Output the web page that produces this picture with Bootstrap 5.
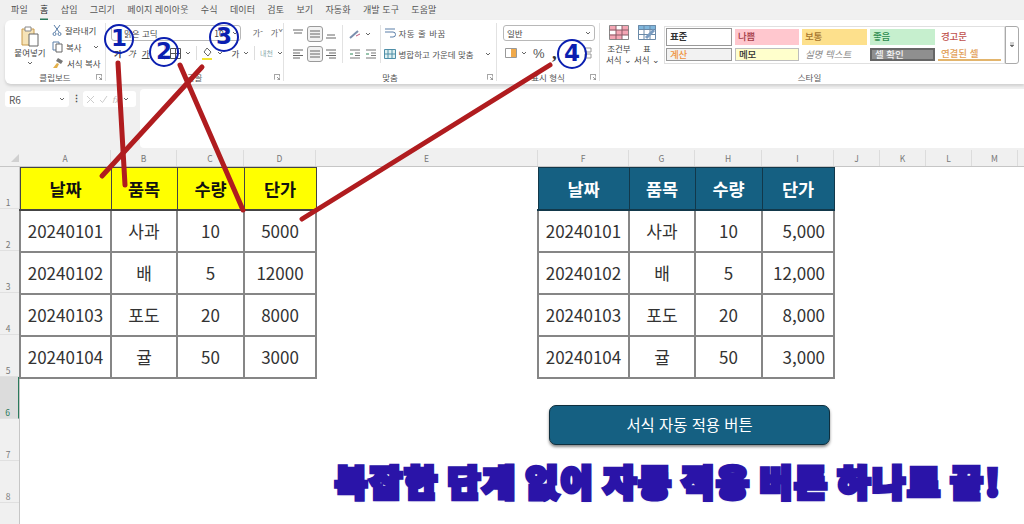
<!DOCTYPE html>
<html lang="ko">

<head>
    <meta charset="UTF-8">
    <title>서식 자동 적용</title>
    <link href="https://cdn.jsdelivr.net/npm/bootstrap@5.3.3/dist/css/bootstrap.min.css" rel="stylesheet">
    <style>
        html, body { width: 1024px; height: 524px; overflow: hidden; }
        body { background: #f0f0f0; color: #444; font-family: "Noto Sans CJK KR", sans-serif; font-size: 8.5px; line-height: 1; position: relative; }
        svg { display: block; flex: none; }

        /* title tabs */
        .xl-tabs { height: 20px; padding-left: 11px; gap: 12.3px; font-size: 9px; }
        .xl-tab { height: 20px; line-height: 19px; color: #555; letter-spacing: .1px; white-space: nowrap; }
        .xl-tab-on { color: #222; box-shadow: inset 0 -2px 0 -0.5px #2b7a5c; }

        /* ribbon */
        .xl-ribbon { margin-left: 5px; height: 64px; background: #fff; border-radius: 6px 0 0 6px; box-shadow: 0 2px 3px #d0d0d0; }
        .xl-grp { position: relative; border-right: 1px solid #e2e2e2; height: 58px; margin-top: 3px; padding-top: 2px; flex: none; }
        .xl-grp-label { position: absolute; left: 0; right: 0; top: 50px; text-align: center; color: #555; }
        .xl-more { position: absolute; right: 3px; top: 51px; }
        .g-clip { width: 101px; }
        .g-font { width: 178px; }
        .g-align { width: 213px; }
        .g-num { width: 103px; }
        .g-style { width: 419px; border-right: 0; }
        .xl-chev { margin-left: 4px; }

        .clip-paste { width: 38px; margin-left: 6px; text-align: center; }
        .clip-paste div { margin-top: 1px; white-space: nowrap; }
        .clip-list { margin: -1px 0 0 3px; gap: 4.5px; }
        .clip-item { gap: 3px; height: 12px; line-height: 12px; white-space: nowrap; }

        .font-box { margin: 0 0 0 5px; width: 134px; height: 16px; border: 1px solid #b8b8b8; border-radius: 3px; padding: 0 2px 0 12px; line-height: 14px; }
        .font-top { gap: 8px; }
        .font-row { margin: 6px 0 0 8px; height: 12px; line-height: 12px; }
        .font-sz { color: #666; font-size: 8px; white-space: nowrap; }
        .font-ruby { color: #8aa; font-size: 7px; white-space: nowrap; }
        .font-sep { width: 1px; height: 14px; background: #ddd; margin: 0 5px; }
        .font-b { width: 17px; font-weight: 700; }
        .font-i { width: 17px; font-style: italic; }
        .font-u { width: 21px; text-decoration: underline; }

        .align-cell { width: 16.5px; height: 16px; display: flex; align-items: center; justify-content: center; }
        .align-on { border: 1px solid #9a9a9a; border-radius: 3px; background: #f2f2f2; }
        .align-col { padding: 0 0 0 6px; gap: 3px; }
        .align-row { height: 17px; align-items: center; }
        .align-sep { width: 1px; height: 38px; background: #e2e2e2; }
        .align-sep-a { margin-left: 2px; }
        .align-sep-b { margin-left: 3px; }
        .align-wrap { padding: 0 0 0 3px; gap: 5px; }
        .wrap-item { gap: 3px; height: 16px; align-items: center; white-space: nowrap; color: #555; }
        .wrap-text { letter-spacing: .5px; }

        .num-box { margin: 0 0 0 6px; width: 92px; height: 16px; border: 1px solid #b8b8b8; border-radius: 3px; padding: 0 3px; line-height: 14px; }
        .num-row { margin: 5px 0 0 8px; height: 14px; }
        .num-pct { font-size: 13px; margin-left: 6px; width: 16px; color: #555; font-family: "Liberation Sans", sans-serif; }
        .num-comma { font-size: 19px; font-weight: 700; width: 32px; margin-left: 3px; line-height: 10px; color: #333; font-family: "Liberation Serif", serif; }

        .cond-item { width: 30px; text-align: center; line-height: 11px; white-space: nowrap; }
        .cond-first { margin-left: 5px; }
        .cond-item svg { margin: 0 auto 3px; }
        .gallery { margin: 1px 0 0 3px; width: 341px; height: 38px; border: 1px solid #e0e0e0; display: grid; grid-template-columns: 69px 67px 68px 68px 66px; grid-template-rows: 18px 15px; row-gap: 1px; padding: 1px 0 0 1px; }
        .gal-scroll { margin: 1px 0 0 0; width: 15px; height: 38px; border: 1px solid #aaa; border-radius: 0 3px 3px 0; }
        .sty { display: flex; align-items: center; font-size: 9.5px; padding-left: 3px; margin: 1px 3px 1px 0; font-weight: 500; }
        .sty-norm { border: 1px solid #999; color: #333; margin: 0 3px 0 0; font-weight: 700; }
        .sty-bad { background: #ffc7ce; color: #a33a45; }
        .sty-mid { background: #fde08c; color: #a5742d; }
        .sty-good { background: #c6efce; color: #2c8a4d; }
        .sty-warn { color: #c0504d; }
        .sty-calc { background: #f2f2f2; border: 1px solid #999; color: #ef9440; }
        .sty-memo { background: #ffffcc; border: 1px solid #bdbdbd; color: #333; }
        .sty-note { color: #8a8a8a; font-style: italic; font-weight: 400; }
        .sty-check { background: #8f8f8f; border: 2px solid #666; color: #f2f2f2; }
        .sty-link { color: #e2a05a; border-bottom: 2px solid #e3b56d; }

        /* formula bar */
        .xl-fbar { height: 66px; padding: 7px 0 2px 5px; }
        .fbar-name { width: 64px; height: 16px; background: #fff; border-radius: 3px; padding: 0 4px; font-size: 10px; color: #555; line-height: 15px; }
        .fbar-dots { width: 14px; text-align: center; line-height: 14px; font-weight: 700; }
        .fbar-fn { width: 53px; height: 16px; background: #fff; border-radius: 3px; padding: 0 3px; gap: 4px; color: #bbb; }
        .fbar-input { margin: -2px 0 0 4px; flex: 1; height: 59px; background: #fff; border-radius: 4px 0 0 4px; }

        /* sheet */
        .xl-cols { height: 17px; border-bottom: 1px solid #c6c6c6; }
        .col-corner { width: 20px; position: relative; }
        .col-corner svg { position: absolute; left: 11px; top: 4px; }
        .col-h { text-align: center; line-height: 16px; color: #777; font-size: 8.5px; border-right: 1px solid #dcdcdc; }
        .cw-a { width: 91px; }
        .cw-b { width: 66px; }
        .cw-c { width: 67px; }
        .cw-d { width: 72px; }
        .cw-e { width: 222px; }
        .cw-j { width: 46px; }
        .xl-body { height: 357px; }
        .row-heads { width: 20px; border-right: 1px solid #c6c6c6; flex: none; }
        .row-h { height: 42px; text-align: center; color: #777; padding: 31px 3px 0 0; font-size: 8.5px; border-bottom: 1px solid #e0e0e0; }
        .row-on { background: #dcdcdc; border-right: 1px solid #2b7a5c; color: #2b7a5c; }
        .xl-cells { background: #fff; flex: 1; }

        .xl-table { table-layout: fixed; width: 297px; margin: 0 0 0 -1px; border-color: #868686; flex: none; }
        .xl-table > :not(caption) > * > * { padding: 0; height: 42px; text-align: center; vertical-align: middle; font-size: 17px; line-height: 1; color: #333; border-width: 2px; box-shadow: none; background: transparent; }
        .xl-table .money { text-align: right; padding-right: 8px; }
        .xl-table thead th { font-size: 17.5px; font-weight: 700; color: #111; border-width: 1px 1px 2px; border-color: #444; }
        .tbl-plain thead th { background: #ffff00; }
        .tbl-done { margin-left: 220px; }
        .tbl-done thead th { background: #156082; color: #fff; border-color: #12384a; }

        .auto-btn { position: absolute; left: 549px; top: 405px; width: 281px; height: 40px; background: #156082; border: 1px solid #0f2f3e; border-radius: 7px; color: #fff; font-size: 15.4px; line-height: 1; box-shadow: 0 2px 3px #8a8a8a; padding: 0; }
        .headline { position: absolute; left: 335px; top: 459px; white-space: nowrap; font-size: 35px; line-height: 44px; font-weight: 900; color: #2a14a8; -webkit-text-stroke: 4.5px #2a14a8; letter-spacing: 2.6px; word-spacing: -4px; text-shadow: 0 1px 3px #8d83c8; }

        .mark-line { position: absolute; left: 0; top: 0; pointer-events: none; }
        .step { position: absolute; width: 30px; height: 30px; border: 2.5px solid #0b1fb0; color: #0b1fb0; font-size: 23px; font-weight: 700; line-height: 24px; text-align: center; font-family: "DejaVu Sans", sans-serif; }
        .step-1 { left: 104px; top: 24px; }
        .step-2 { left: 149px; top: 37px; }
        .step-3 { left: 209px; top: 22px; }
        .step-4 { left: 557px; top: 39px; }
    </style>
</head>

<body>
    <svg width="0" height="0" class="position-absolute">
        <symbol id="chev" viewBox="0 0 6 4"><path d="M1 1l2 2 2-2" fill="none" stroke="#666" stroke-width="1"/></symbol>
        <symbol id="more" viewBox="0 0 8 8"><path d="M.5 7.500v-7h7v3M4 4l3.500 3.500M4.500 7.500h3v-3" fill="none" stroke="#777" stroke-width="1"/></symbol>
        <symbol id="al-top" viewBox="0 0 12 10"><path d="M1 1h10M2 4h8" stroke="#666" fill="none"/></symbol>
        <symbol id="al-mid" viewBox="0 0 12 10"><path d="M1 2h10M1 5h10M1 8h10" stroke="#666" fill="none"/></symbol>
        <symbol id="al-bot" viewBox="0 0 12 10"><path d="M2 6h8M1 9h10" stroke="#666" fill="none"/></symbol>
        <symbol id="al-left" viewBox="0 0 12 10"><path d="M1 1h10M1 4h7M1 6.500h10M1 9h7" stroke="#666" fill="none"/></symbol>
        <symbol id="al-right" viewBox="0 0 12 10"><path d="M1 1h10M4 4h7M1 6.500h10M4 9h7" stroke="#666" fill="none"/></symbol>
        <symbol id="indent" viewBox="0 0 12 10"><path d="M1 1h10M6 4h5M6 6.500h5M1 9h10" stroke="#777" fill="none"/><path d="M1 5h3" stroke="#2e8a5a" fill="none"/></symbol>
    </svg>

    <div class="xl-tabs d-flex">
        <span class="xl-tab">파일</span>
        <span class="xl-tab xl-tab-on">홈</span>
        <span class="xl-tab">삽입</span>
        <span class="xl-tab">그리기</span>
        <span class="xl-tab">페이지 레이아웃</span>
        <span class="xl-tab">수식</span>
        <span class="xl-tab">데이터</span>
        <span class="xl-tab">검토</span>
        <span class="xl-tab">보기</span>
        <span class="xl-tab">자동화</span>
        <span class="xl-tab">개발 도구</span>
        <span class="xl-tab">도움말</span>
    </div>

    <div class="xl-ribbon d-flex">
        <div class="xl-grp g-clip d-flex">
            <div class="clip-paste">
                <svg width="20" height="22" viewBox="0 0 20 22" class="mx-auto"><path d="M2 4h12v16H2z" fill="#f6e3b8" stroke="#c99a4b"/><path d="M5 2h6v4H5z" fill="#fff" stroke="#888"/><path d="M9 9h9v12H9z" fill="#fff" stroke="#666"/></svg>
                <div>붙여넣기</div>
                <svg width="6" height="4" class="mx-auto mt-1"><use href="#chev"/></svg>
            </div>
            <div class="clip-list d-flex flex-column">
                <div class="clip-item d-flex">
                    <svg width="10" height="12" viewBox="0 0 10 12"><path d="M2 1l5 7M8 1L3 8" stroke="#5a7ea8" fill="none"/><circle cx="2.500" cy="10" r="1.500" fill="none" stroke="#5a7ea8"/><circle cx="7.500" cy="10" r="1.500" fill="none" stroke="#5a7ea8"/></svg>
                    <span>잘라내기</span>
                </div>
                <div class="clip-item d-flex align-items-center">
                    <svg width="11" height="12" viewBox="0 0 11 12"><path d="M1 1h6v8H1z" fill="#fff" stroke="#5a7ea8"/><path d="M4 3h6v8H4z" fill="#fff" stroke="#666"/></svg>
                    <span>복사</span>
                    <svg width="6" height="4" class="ms-2"><use href="#chev"/></svg>
                </div>
                <div class="clip-item d-flex">
                    <svg width="12" height="12" viewBox="0 0 12 12"><path d="M6 1l5 3-2 3-5-3z" fill="#777"/><path d="M5 6L1 11h4l2-4z" fill="#e3b04b"/></svg>
                    <span>서식 복사</span>
                </div>
            </div>
            <div class="xl-grp-label">클립보드</div>
            <svg class="xl-more" width="6" height="6"><use href="#more"/></svg>
        </div>

        <div class="xl-grp g-font">
            <div class="d-flex align-items-center font-top">
                <div class="font-box d-flex align-items-center justify-content-between">
                    <span>맑은 고딕</span><span class="ms-auto me-2">10</span>
                    <svg width="6" height="4"><use href="#chev"/></svg>
                </div>
                <span class="font-sz ms-1">가ˆ</span>
                <span class="font-sz">가ˇ</span>
            </div>
            <div class="font-row d-flex align-items-center">
                <span class="font-b">가</span>
                <span class="font-i">가</span>
                <span class="font-u">가</span>
                <span class="font-sep"></span>
                <svg width="11" height="11" viewBox="0 0 11 11"><path d="M.5.500h10v10H.500zM5.500.500v10M.500 5.500h10" fill="none" stroke="#555"/></svg>
                <svg class="xl-chev" width="6" height="4"><use href="#chev"/></svg>
                <span class="font-sep"></span>
                <svg width="12" height="13" viewBox="0 0 12 13"><path d="M6 1l4 4-3 4-4-4z" fill="#fff" stroke="#666"/><path d="M1 11h10v2H1z" fill="#f2e533"/></svg>
                <svg class="xl-chev" width="6" height="4"><use href="#chev"/></svg>
                <span class="ms-2">가</span>
                <svg class="xl-chev" width="6" height="4"><use href="#chev"/></svg>
                <span class="font-sep"></span>
                <span class="font-ruby">내천</span>
                <svg class="xl-chev" width="6" height="4"><use href="#chev"/></svg>
            </div>
            <div class="xl-grp-label">글꼴</div>
            <svg class="xl-more" width="6" height="6"><use href="#more"/></svg>
        </div>

        <div class="xl-grp g-align d-flex">
            <div class="align-col d-flex flex-column">
                <div class="d-flex align-row">
                    <span class="align-cell"><svg width="12" height="10"><use href="#al-top"/></svg></span>
                    <span class="align-cell align-on"><svg width="12" height="10"><use href="#al-mid"/></svg></span>
                    <span class="align-cell"><svg width="12" height="10"><use href="#al-bot"/></svg></span>
                </div>
                <div class="d-flex align-row">
                    <span class="align-cell"><svg width="12" height="10"><use href="#al-left"/></svg></span>
                    <span class="align-cell align-on"><svg width="12" height="10"><use href="#al-mid"/></svg></span>
                    <span class="align-cell"><svg width="12" height="10"><use href="#al-right"/></svg></span>
                </div>
            </div>
            <span class="align-sep align-sep-a"></span>
            <div class="align-col d-flex flex-column">
                <div class="d-flex align-row">
                    <svg width="12" height="10" viewBox="0 0 12 10"><path d="M1 9l8-7" stroke="#7a8fae" stroke-width="2" fill="none"/><path d="M7 7l4-2" stroke="#c05a7c" fill="none"/></svg>
                    <svg class="xl-chev" width="6" height="4"><use href="#chev"/></svg>
                </div>
                <div class="d-flex align-row gap-1">
                    <svg width="12" height="10"><use href="#indent"/></svg>
                    <svg width="12" height="10"><use href="#indent"/></svg>
                </div>
            </div>
            <span class="align-sep align-sep-b"></span>
            <div class="align-wrap d-flex flex-column">
                <div class="wrap-item d-flex">
                    <svg width="12" height="12" viewBox="0 0 12 12"><path d="M1 2h10M1 5h8a2 2 0 0 1 0 5H6" fill="none" stroke="#5a7ea8"/></svg>
                    <span class="wrap-text">자동 줄 바꿈</span>
                </div>
                <div class="wrap-item d-flex">
                    <svg width="12" height="12" viewBox="0 0 12 12"><path d="M.5 1.500h11v9H.500zM.500 6h11M4 1.500v9M8 1.500v9" fill="#dff0f0" stroke="#4f8fa8"/></svg>
                    <span>병합하고 가운데 맞춤</span>
                    <svg class="ms-2" width="6" height="4"><use href="#chev"/></svg>
                </div>
            </div>
            <div class="xl-grp-label">맞춤</div>
            <svg class="xl-more" width="6" height="6"><use href="#more"/></svg>
        </div>

        <div class="xl-grp g-num">
            <div class="num-box d-flex align-items-center justify-content-between">
                <span>일반</span>
                <svg width="6" height="4"><use href="#chev"/></svg>
            </div>
            <div class="num-row d-flex align-items-center">
                <svg width="12" height="10" viewBox="0 0 12 10"><path d="M.5.500h11v9H.500z" fill="#fff" stroke="#999"/><path d="M6 1h5v8H6z" fill="#f0a94a"/></svg>
                <svg class="xl-chev" width="6" height="4"><use href="#chev"/></svg>
                <span class="num-pct">%</span>
                <span class="num-comma">,</span>
                <svg width="8" height="12" viewBox="0 0 8 12"><path d="M1 1h6v4H1zM1 7h6v4H1z" fill="none" stroke="#999"/></svg>
            </div>
            <div class="xl-grp-label">표시 형식</div>
            <svg class="xl-more" width="6" height="6"><use href="#more"/></svg>
        </div>

        <div class="xl-grp g-style d-flex">
            <div class="cond-item cond-first">
                <svg width="20" height="15" viewBox="0 0 20 15"><path d="M.5.500h19v14H.500z" fill="#f4a6b4" stroke="#888"/><path d="M7 1h6v4H7zM1 5.500h6v4H1zM13 10h6v4h-6z" fill="#fff"/><path d="M7 .500v14M13 .500v14M.500 5h19M.500 10h19" stroke="#8a5a66" fill="none"/></svg>
                조건부<br>서식 ⌄
            </div>
            <div class="cond-item">
                <svg width="18" height="15" viewBox="0 0 18 15"><path d="M.5.500h17v14H.500z" fill="#fff" stroke="#6a8aa8"/><path d="M.5.500h17v4H.500z" fill="#7fb6dc" stroke="#6a8aa8"/><path d="M6 .500v14M12 .500v14M.500 9.500h17" stroke="#6a8aa8" fill="none"/><path d="M8 13l8-8" stroke="#7a9cc0" stroke-width="3"/></svg>
                표<br>서식 ⌄
            </div>
            <div class="gallery">
                <div class="sty sty-norm">표준</div>
                <div class="sty sty-bad">나쁨</div>
                <div class="sty sty-mid">보통</div>
                <div class="sty sty-good">좋음</div>
                <div class="sty sty-warn">경고문</div>
                <div class="sty sty-calc">계산</div>
                <div class="sty sty-memo">메모</div>
                <div class="sty sty-note">설명 텍스트</div>
                <div class="sty sty-check">셀 확인</div>
                <div class="sty sty-link">연결된 셀</div>
            </div>
            <div class="gal-scroll d-flex align-items-center justify-content-center">
                <svg width="6" height="6" viewBox="0 0 6 6"><path d="M1 1h4M1 3l2 2 2-2z" fill="#666" stroke="#666" stroke-width=".6"/></svg>
            </div>
            <div class="xl-grp-label">스타일</div>
        </div>
    </div>

    <div class="xl-fbar d-flex">
        <div class="fbar-name d-flex justify-content-between align-items-center">
            <span>R6</span>
            <svg width="6" height="4"><use href="#chev"/></svg>
        </div>
        <div class="fbar-dots">⋮</div>
        <div class="fbar-fn d-flex align-items-center">
            <svg width="9" height="9" viewBox="0 0 9 9"><path d="M1 1l7 7M8 1L1 8" stroke="#ccc" fill="none"/></svg>
            <svg width="9" height="9" viewBox="0 0 9 9"><path d="M1 5l2.500 2.500L8 1" stroke="#ccc" fill="none"/></svg>
            <span class="fst-italic">fx</span>
            <svg width="6" height="4"><use href="#chev"/></svg>
        </div>
        <div class="fbar-input"></div>
    </div>

    <div class="xl-cols d-flex">
        <div class="col-corner"><svg width="8" height="8" viewBox="0 0 8 8"><path d="M8 0v8H0z" fill="#d0d0d0"/></svg></div>
        <div class="col-h cw-a">A</div>
        <div class="col-h cw-b">B</div>
        <div class="col-h cw-c">C</div>
        <div class="col-h cw-d">D</div>
        <div class="col-h cw-e">E</div>
        <div class="col-h cw-a">F</div>
        <div class="col-h cw-b">G</div>
        <div class="col-h cw-c">H</div>
        <div class="col-h cw-d">I</div>
        <div class="col-h cw-j">J</div>
        <div class="col-h cw-j">K</div>
        <div class="col-h cw-j">L</div>
        <div class="col-h cw-j">M</div>
    </div>

    <div class="xl-body d-flex">
        <div class="row-heads">
            <div class="row-h">1</div>
            <div class="row-h">2</div>
            <div class="row-h">3</div>
            <div class="row-h">4</div>
            <div class="row-h">5</div>
            <div class="row-h row-on">6</div>
            <div class="row-h">7</div>
            <div class="row-h">8</div>
        </div>
        <div class="xl-cells d-flex align-items-start">
            <table class="table table-bordered xl-table tbl-plain">
                <thead>
                    <tr><th class="cw-a">날짜</th><th class="cw-b">품목</th><th class="cw-c">수량</th><th class="cw-d">단가</th></tr>
                </thead>
                <tbody>
                    <tr><td>20240101</td><td>사과</td><td>10</td><td>5000</td></tr>
                    <tr><td>20240102</td><td>배</td><td>5</td><td>12000</td></tr>
                    <tr><td>20240103</td><td>포도</td><td>20</td><td>8000</td></tr>
                    <tr><td>20240104</td><td>귤</td><td>50</td><td>3000</td></tr>
                </tbody>
            </table>
            <table class="table table-bordered xl-table tbl-done">
                <thead>
                    <tr><th class="cw-a">날짜</th><th class="cw-b">품목</th><th class="cw-c">수량</th><th class="cw-d">단가</th></tr>
                </thead>
                <tbody>
                    <tr><td>20240101</td><td>사과</td><td>10</td><td class="money">5,000</td></tr>
                    <tr><td>20240102</td><td>배</td><td>5</td><td class="money">12,000</td></tr>
                    <tr><td>20240103</td><td>포도</td><td>20</td><td class="money">8,000</td></tr>
                    <tr><td>20240104</td><td>귤</td><td>50</td><td class="money">3,000</td></tr>
                </tbody>
            </table>
        </div>
    </div>

    <button type="button" class="btn auto-btn">서식 자동 적용 버튼</button>
    <div class="headline">복잡한 단계 없이 자동 적용 버튼 하나로 끝!</div>

    <svg class="mark-line" width="1024" height="524" viewBox="0 0 1024 524">
        <g stroke="#b01c1f" stroke-width="5" stroke-linecap="round" fill="none">
            <path d="M118 63L125 185"/>
            <path d="M202 67L102 176"/>
            <path d="M180 65L243 210"/>
            <path d="M302 219L550 65"/>
        </g>
    </svg>
    <div class="step step-1 rounded-circle">1</div>
    <div class="step step-2 rounded-circle">2</div>
    <div class="step step-3 rounded-circle">3</div>
    <div class="step step-4 rounded-circle">4</div>

</body>

</html>
